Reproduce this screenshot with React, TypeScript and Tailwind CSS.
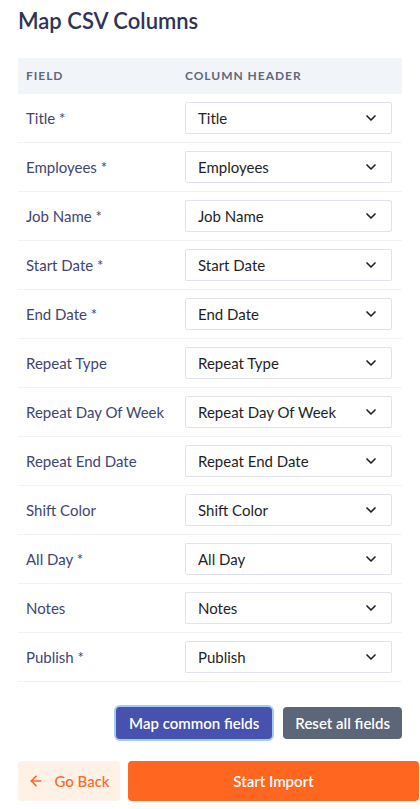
import React from 'react';
import { ChevronDown, ArrowLeft } from 'lucide-react';

const fields = [
  { label: 'Title', required: true },
  { label: 'Employees', required: true },
  { label: 'Job Name', required: true },
  { label: 'Start Date', required: true },
  { label: 'End Date', required: true },
  { label: 'Repeat Type', required: false },
  { label: 'Repeat Day Of Week', required: false },
  { label: 'Repeat End Date', required: false },
  { label: 'Shift Color', required: false },
  { label: 'All Day', required: true },
  { label: 'Notes', required: false },
  { label: 'Publish', required: true },
];

const FieldRow: React.FC<{ label: string; required: boolean }> = ({ label, required }) => (
  <div className="flex items-center h-[49px] border-b border-[#f1f2f6]">
    <div className="w-[167px] pl-2 text-[15px] text-[#41466f] whitespace-nowrap">
      {label}
      {required && ' *'}
    </div>
    <div className="w-[207px] h-[32px] border border-[#e1e2ec] rounded-[2px] flex items-center justify-between pl-3 pr-3 text-[15px] text-[#1f1f24]">
      <span className="whitespace-nowrap">{label}</span>
      <ChevronDown className="w-4 h-4 text-[#1f1f24]" strokeWidth={2.5} />
    </div>
  </div>
);

export default function App() {
  return (
    <div className="w-[420px] min-h-[809px] bg-white px-[18px] pt-[8px] overflow-hidden" style={{ fontFamily: 'Lato, "Noto Sans", sans-serif' }}>
      <h1 className="text-[22px] font-semibold text-[#2e3358] h-[26px] leading-[26px]">Map CSV Columns</h1>
      <div className="mt-[24px]">
        <div className="flex items-center h-[36px] bg-[#f1f5f9] text-[12px] font-bold tracking-[0.08em] text-[#5f6779]">
          <div className="w-[167px] pl-2">FIELD</div>
          <div>COLUMN HEADER</div>
        </div>
        {fields.map(f => (
          <FieldRow key={f.label} label={f.label} required={f.required} />
        ))}
      </div>
      <div className="flex justify-end gap-[11px] mt-[25px]">
        <button className="h-[32px] px-[13px] rounded-[4px] bg-[#4751ae] text-white text-[15px] font-semibold ring-2 ring-[#a5cbf2]">
          Map common fields
        </button>
        <button className="h-[32px] px-[12px] rounded-[4px] bg-[#5b6678] text-white text-[15px] font-semibold">
          Reset all fields
        </button>
      </div>
      <div className="flex gap-2 mt-[22px] mr-[-17px]">
        <button className="w-[102px] h-[40px] rounded-[4px] bg-[#fff1e5] text-[#f56c2c] text-[15px] font-medium flex items-center justify-center gap-[10px]">
          <ArrowLeft className="w-4 h-4" strokeWidth={2.5} />
          Go Back
        </button>
        <button className="flex-1 h-[40px] rounded-[4px] bg-[#ff6620] text-white text-[15px] font-semibold">
          Start Import
        </button>
      </div>
    </div>
  );
}
